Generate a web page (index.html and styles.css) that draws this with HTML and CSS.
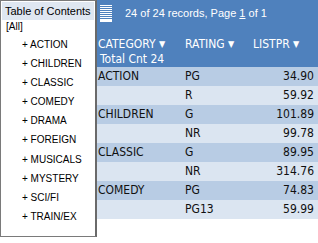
FILE: index.html
```html
<!DOCTYPE html>
<html>

<head>
    <title>Report</title>
    <link rel="stylesheet" href="styles.css">
</head>

<body>
    <div class="page">
        <!-- Table of contents -->
        <div class="toc">
            <div class="toc-title">Table of Contents</div>
            <div class="toc-all">[All]</div>
            <ul class="toc-list">
                <li>+ ACTION</li>
                <li>+ CHILDREN</li>
                <li>+ CLASSIC</li>
                <li>+ COMEDY</li>
                <li>+ DRAMA</li>
                <li>+ FOREIGN</li>
                <li>+ MUSICALS</li>
                <li>+ MYSTERY</li>
                <li>+ SCI/FI</li>
                <li>+ TRAIN/EX</li>
            </ul>
        </div>

        <!-- Report -->
        <div class="report">
            <div class="report-head">
                <div class="toolbar">
                    <svg class="menu-icon" width="12" height="17" viewBox="0 0 12 17">
                        <rect x="0" y="0" width="12" height="1" fill="#fff" />
                        <rect x="0" y="2" width="12" height="1" fill="#fff" />
                        <rect x="0" y="4" width="12" height="1" fill="#fff" />
                        <rect x="0" y="6" width="12" height="1" fill="#fff" />
                        <rect x="0" y="8" width="12" height="1" fill="#fff" />
                        <rect x="0" y="10" width="12" height="1" fill="#fff" />
                        <rect x="0" y="12" width="12" height="1" fill="#fff" />
                        <rect x="0" y="14" width="12" height="3" fill="#fff" />
                    </svg>
                    <span class="records">24 of 24 records, Page <u>1</u> of 1</span>
                </div>
                <div class="cols">
                    <span class="col cat">CATEGORY <span class="arrow">▼</span></span>
                    <span class="col rat">RATING <span class="arrow">▼</span></span>
                    <span class="col price">LISTPR <span class="arrow">▼</span></span>
                </div>
                <div class="total">Total Cnt 24</div>
            </div>
            <div class="rows">
                <div class="row dark"><span class="cat">ACTION</span><span class="rat">PG</span><span class="price">34.90</span></div>
                <div class="row light"><span class="cat"></span><span class="rat">R</span><span class="price">59.92</span></div>
                <div class="row dark"><span class="cat">CHILDREN</span><span class="rat">G</span><span class="price">101.89</span></div>
                <div class="row light"><span class="cat"></span><span class="rat">NR</span><span class="price">99.78</span></div>
                <div class="row dark"><span class="cat">CLASSIC</span><span class="rat">G</span><span class="price">89.95</span></div>
                <div class="row light"><span class="cat"></span><span class="rat">NR</span><span class="price">314.76</span></div>
                <div class="row dark"><span class="cat">COMEDY</span><span class="rat">PG</span><span class="price">74.83</span></div>
                <div class="row light"><span class="cat"></span><span class="rat">PG13</span><span class="price">59.99</span></div>
            </div>
        </div>
    </div>
</body>

</html>
```

FILE: styles.css
```css
* {
    margin: 0;
    padding: 0;
    box-sizing: border-box;
}

body {
    font-family: 'Liberation Sans', Arial, sans-serif;
    background-color: #ffffff;
    color: #000000;
    width: 318px;
    height: 243px;
    overflow: hidden;
}

.page {
    display: flex;
    align-items: flex-start;
}

.toc {
    width: 97px;
    height: 237px;
    border: 1px solid #7a7a7a;
    border-right: 2px solid #6a6a6a;
    padding: 1px;
    flex-shrink: 0;
}

.toc-title {
    background: #dfe7f1;
    font-size: 11px;
    height: 18px;
    line-height: 18px;
    padding-left: 3px;
}

.toc-all {
    font-size: 10px;
    line-height: 14px;
    padding-left: 4px;
}

.toc-list {
    list-style: none;
    margin-top: 0.5px;
}

.toc-list li {
    font-size: 10px;
    height: 19.2px;
    line-height: 19px;
    padding-left: 20px;
}

.report {
    flex: 1;
    font-family: 'DejaVu Sans Condensed', 'DejaVu Sans', sans-serif;
}

.report-head {
    background: #4f81bd;
    color: #ffffff;
    height: 67px;
}

.toolbar {
    display: flex;
    align-items: center;
    height: 26px;
    padding-left: 3px;
}

.menu-icon {
    margin-top: 1px;
}

.records {
    font-family: 'Liberation Sans', Arial, sans-serif;
    font-size: 11px;
    margin-left: 13px;
}

.cols {
    display: flex;
    font-size: 12px;
    height: 23px;
    line-height: 23px;
    padding-top: 7px;
}

.cols,
.row {
    display: flex;
}

.cat {
    width: 88px;
    padding-left: 1px;
}

.rat {
    width: 68px;
}

.price {
    width: 65px;
    text-align: right;
    padding-right: 4px;
}

.cols .price {
    text-align: left;
    padding-right: 0;
}

.arrow {
    font-size: 9px;
    vertical-align: 1px;
}

.total {
    font-size: 12px;
    line-height: 14px;
    padding-left: 3px;
    margin-top: 3px;
}

.row {
    font-size: 12px;
    height: 19px;
    line-height: 19px;
    color: #101010;
}

.row.dark {
    background: #b8cce4;
}

.row.light {
    background: #dbe5f1;
}
```
